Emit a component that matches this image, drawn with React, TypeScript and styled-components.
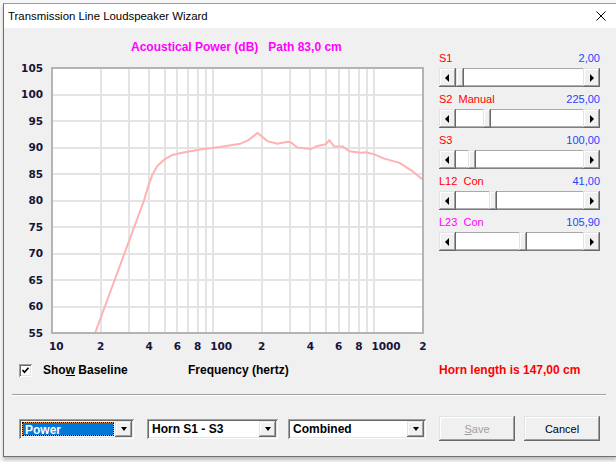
import React from 'react';
import styled, { createGlobalStyle } from 'styled-components';

const GlobalStyle = createGlobalStyle`
  html, body {
    margin: 0;
    padding: 0;
  }
  body {
    width: 616px;
    height: 462px;
    overflow: hidden;
    background: #f6f6f6;
    font-family: "Liberation Sans", Arial, sans-serif;
  }
`;

const Dialog = styled.div`
  margin: 3px 0 0 3px;
  height: 454px;
  box-sizing: border-box;
  display: flex;
  flex-direction: column;
  background: #f0f0f0;
  border-top: 1px solid #9a9a9a;
  border-left: 1px solid #707070;
  border-bottom: 1px solid #707070;
  box-shadow: 0 3px 3px rgba(0, 0, 0, 0.22);
`;

const TitleBar = styled.div`
  height: 24px;
  flex: none;
  display: flex;
  align-items: center;
  padding-left: 4px;
  background: #fff;
  font-size: 11.4px;
  color: #000;
`;

const CloseIcon = styled.svg`
  margin-left: auto;
  margin-right: 10px;
`;

const Main = styled.div`
  display: flex;
  padding-top: 12px;
`;

const ChartColumn = styled.div`
  width: 426px;
  flex: none;
`;

const ChartTitle = styled.div`
  height: 15px;
  line-height: 15px;
  padding-left: 127px;
  font-size: 12px;
  font-weight: bold;
  color: #ff00ff;
  white-space: pre;
`;

const ChartSvg = styled.svg`
  display: block;
`;

const SidePanel = styled.div`
  width: 161px;
  margin-left: 9px;
  padding-top: 11px;
  display: flex;
  flex-direction: column;
  gap: 5px;
`;

const SliderGroup = styled.div`
  display: flex;
  flex-direction: column;
  gap: 2px;
`;

const SliderHead = styled.div`
  height: 15px;
  line-height: 15px;
  display: flex;
  justify-content: space-between;
  font-size: 11px;
  white-space: pre;
`;

const SliderName = styled.span<{ $color: string }>`
  color: ${p => p.$color};
`;

const SliderValue = styled.span`
  color: #1f44ff;
`;

const ScrollBar = styled.div`
  height: 19px;
  display: flex;
`;

const ArrowButton = styled.div`
  width: 17px;
  flex: none;
  display: flex;
  align-items: center;
  justify-content: center;
  background: #f0f0f0;
  box-shadow: inset -1px -1px #696969, inset 1px 1px #e3e3e3, inset -2px -2px #a0a0a0,
    inset 2px 2px #fff;
`;

const Arrow = styled.div<{ $dir: 'left' | 'right' }>`
  width: 0;
  height: 0;
  border-top: 4px solid transparent;
  border-bottom: 4px solid transparent;
  ${p =>
    p.$dir === 'left'
      ? 'border-right: 4px solid #000; margin-left: -1px;'
      : 'border-left: 4px solid #000; margin-left: 1px;'}
`;

const Track = styled.div`
  flex: 1;
  display: flex;
  background: #fff;
  box-shadow: inset 0 1px #a9a9a9, inset 0 -1px #808080, inset 0 -2px #b0b0b0;
`;

const Thumb = styled.div`
  width: 8px;
  flex: none;
  background: #f0f0f0;
  box-shadow: inset -1px -1px #696969, inset 1px 1px #e3e3e3, inset -2px -2px #a0a0a0,
    inset 2px 2px #fff;
`;

const InfoRow = styled.div`
  height: 24px;
  display: grid;
  grid-template-columns: 169px 251px 1fr;
  align-items: center;
  padding-left: 15px;
  font-size: 12px;
  font-weight: bold;
`;

const CheckField = styled.label`
  display: flex;
  align-items: center;
  gap: 11px;
  color: #000;
`;

const CheckBox = styled.span`
  width: 13px;
  height: 13px;
  box-sizing: border-box;
  display: flex;
  align-items: center;
  justify-content: center;
  background: #fff;
  box-shadow: inset 1px 1px #a0a0a0, inset -1px -1px #fff, inset 2px 2px #696969,
    inset -2px -2px #e3e3e3;
`;

const InfoText = styled.span<{ $color?: string }>`
  color: ${p => p.$color ?? '#000'};
`;

const Separator = styled.div`
  margin: 12px 10px 0 8px;
  border-top: 1px solid #a0a0a0;
  border-bottom: 1px solid #fff;
`;

const Footer = styled.div`
  display: flex;
  align-items: center;
  padding: 20px 0 0 15px;
  height: 25px;
`;

const Combo = styled.div<{ $w: number; $gap: number }>`
  width: ${p => p.$w}px;
  margin-right: ${p => p.$gap}px;
  height: 20px;
  box-sizing: border-box;
  padding: 2px;
  flex: none;
  display: flex;
  background: #fff;
  box-shadow: inset 1px 1px #a0a0a0, inset -1px -1px #fff, inset 2px 2px #696969,
    inset -2px -2px #e3e3e3;
`;

const ComboText = styled.div<{ $selected?: boolean }>`
  flex: 1;
  margin: ${p => (p.$selected ? '1px' : '0')};
  padding-left: ${p => (p.$selected ? '2px' : '3px')};
  line-height: ${p => (p.$selected ? '14px' : '16px')};
  font-size: 12px;
  font-weight: bold;
  color: ${p => (p.$selected ? '#fff' : '#000')};
  border: ${p => (p.$selected ? '1px dotted #000' : 'none')};
  background: ${p =>
    p.$selected ? 'linear-gradient(#0078d7, #0078d7) padding-box, #f5a04a border-box' : 'transparent'};
  white-space: nowrap;
  overflow: hidden;
`;

const DropButton = styled.div`
  width: 17px;
  flex: none;
  display: flex;
  align-items: center;
  justify-content: center;
  background: #f0f0f0;
  box-shadow: inset -1px -1px #696969, inset 1px 1px #e3e3e3, inset -2px -2px #a0a0a0,
    inset 2px 2px #fff;
`;

const DownArrow = styled.div`
  width: 0;
  height: 0;
  border-left: 3.5px solid transparent;
  border-right: 3.5px solid transparent;
  border-top: 4px solid #000;
`;

const Button = styled.button<{ $gap?: number }>`
  width: 76px;
  height: 25px;
  flex: none;
  margin-right: ${p => p.$gap ?? 0}px;
  padding: 0;
  border: none;
  background: #f0f0f0;
  box-shadow: inset -1px -1px #696969, inset 1px 1px #e3e3e3, inset -2px -2px #a0a0a0,
    inset 2px 2px #fff;
  font-family: "Liberation Sans", Arial, sans-serif;
  font-size: 11px;
  color: #000;
  &:disabled {
    color: #a0a0a0;
  }
`;

// plot geometry inside the chart svg
const X0 = 48;
const X1 = 419;
const Y0 = 13;
const Y1 = 278;
const xOf = (hz: number) => X0 + ((Math.log10(hz) - 1) / Math.log10(200)) * (X1 - X0);
const yOf = (db: number) => Y0 + ((105 - db) / 50) * (Y1 - Y0);

const curve: [number, number][] = [
  [18.5, 55], [37.2, 80], [39.6, 82.8], [42, 84.9], [45, 86.5], [50, 87.8], [56, 88.6],
  [64, 89], [83, 89.6], [110, 90.1], [147, 90.7], [165, 91.4], [189, 92.75], [216, 91.2],
  [250, 90.7], [290, 91.1], [302, 91], [332, 90], [402, 89.7], [443, 90.3], [499, 90.6],
  [524, 91.4], [562, 90.2], [634, 90.2], [698, 89.3], [825, 89], [887, 89.1], [998, 88.7],
  [1153, 87.9], [1430, 87.1], [1691, 85.7], [2000, 83.9],
];

const gridFreqs = [20, 30, 40, 50, 60, 70, 80, 90, 100, 200, 300, 400, 500, 600, 700, 800, 900, 1000];
const gridDb = [60, 65, 70, 75, 80, 85, 90, 95, 100];
const yLabels = [55, 60, 65, 70, 75, 80, 85, 90, 95, 100, 105];
const xLabels: { hz: number; text: string; decade?: boolean }[] = [
  { hz: 10, text: '10', decade: true },
  { hz: 20, text: '2' },
  { hz: 40, text: '4' },
  { hz: 60, text: '6' },
  { hz: 80, text: '8' },
  { hz: 100, text: '100', decade: true },
  { hz: 200, text: '2' },
  { hz: 400, text: '4' },
  { hz: 600, text: '6' },
  { hz: 800, text: '8' },
  { hz: 1000, text: '1000', decade: true },
  { hz: 2000, text: '2' },
];

const axisFont = {
  fontFamily: '"DejaVu Sans", Verdana, sans-serif',
  fontSize: 10.5,
  fontWeight: 'bold' as const,
  fill: '#15153a',
};

function Chart() {
  const pts = curve.map(([hz, db]) => `${xOf(hz).toFixed(1)},${yOf(db).toFixed(1)}`).join(' ');
  return (
    <ChartSvg width={426} height={303}>
      <rect x={X0} y={Y0} width={X1 - X0} height={Y1 - Y0} fill="#fff" />
      <g stroke="#e4e4e4" strokeWidth={2} shapeRendering="crispEdges">
        {gridFreqs.map(f => (
          <line key={f} x1={Math.round(xOf(f))} x2={Math.round(xOf(f))} y1={Y0} y2={Y1} />
        ))}
        {gridDb.map(d => (
          <line key={d} x1={X0} x2={X1} y1={Math.round(yOf(d))} y2={Math.round(yOf(d))} />
        ))}
      </g>
      <polyline points={pts} fill="none" stroke="#ffb2b2" strokeWidth={2} strokeLinejoin="round" />
      <rect
        x={X0}
        y={Y0}
        width={X1 - X0}
        height={Y1 - Y0}
        fill="none"
        stroke="#b4b4b4"
        strokeWidth={2}
        shapeRendering="crispEdges"
      />
      {yLabels.map(d => (
        <text key={d} x={39} y={yOf(d)} dy="0.36em" textAnchor="end" {...axisFont}>
          {d}
        </text>
      ))}
      {xLabels.map((l, i) => (
        <text
          key={i}
          x={l.decade ? xOf(l.hz) - 3 : xOf(l.hz)}
          y={291}
          dy="0.36em"
          textAnchor={l.decade ? 'start' : 'middle'}
          {...axisFont}
        >
          {l.text}
        </text>
      ))}
    </ChartSvg>
  );
}

const sliders = [
  { name: 'S1', color: '#ff0000', value: '2,00', pos: 0 },
  { name: 'S2  Manual', color: '#ff0000', value: '225,00', pos: 0.23 },
  { name: 'S3', color: '#ff0000', value: '100,00', pos: 0.103 },
  { name: 'L12  Con', color: '#ff0000', value: '41,00', pos: 0.28 },
  { name: 'L23  Con', color: '#ff00ff', value: '105,90', pos: 0.532 },
];

const TRACK_RANGE = 127 - 8;

function Slider({ name, color, value, pos }: (typeof sliders)[number]) {
  return (
    <SliderGroup>
      <SliderHead>
        <SliderName $color={color}>{name}</SliderName>
        <SliderValue>{value}</SliderValue>
      </SliderHead>
      <ScrollBar>
        <ArrowButton>
          <Arrow $dir="left" />
        </ArrowButton>
        <Track>
          <Thumb style={{ marginLeft: Math.round(pos * TRACK_RANGE) }} />
        </Track>
        <ArrowButton>
          <Arrow $dir="right" />
        </ArrowButton>
      </ScrollBar>
    </SliderGroup>
  );
}

export default function App() {
  return (
    <>
      <GlobalStyle />
      <Dialog>
        <TitleBar>
          Transmission Line Loudspeaker Wizard
          <CloseIcon width={10} height={10} viewBox="0 0 10 10">
            <path d="M0.5 0.5 L9.5 9.5 M9.5 0.5 L0.5 9.5" stroke="#000" strokeWidth={1} />
          </CloseIcon>
        </TitleBar>
        <Main>
          <ChartColumn>
            <ChartTitle>{'Acoustical Power (dB)   Path 83,0 cm'}</ChartTitle>
            <Chart />
          </ChartColumn>
          <SidePanel>
            {sliders.map(s => (
              <Slider key={s.name} {...s} />
            ))}
          </SidePanel>
        </Main>
        <InfoRow>
          <CheckField>
            <CheckBox>
              <svg width={9} height={9} viewBox="0 0 9 9">
                <path d="M1.5 4 L3.5 6.2 L7.5 1.8" fill="none" stroke="#000" strokeWidth={1.7} />
              </svg>
            </CheckBox>
            <span>
              Sho<u>w</u> Baseline
            </span>
          </CheckField>
          <InfoText>Frequency (hertz)</InfoText>
          <InfoText $color="#ff0000">Horn length is 147,00 cm</InfoText>
        </InfoRow>
        <Separator />
        <Footer>
          <Combo $w={115} $gap={13}>
            <ComboText $selected>Power</ComboText>
            <DropButton>
              <DownArrow />
            </DropButton>
          </Combo>
          <Combo $w={131} $gap={10}>
            <ComboText>Horn S1 - S3</ComboText>
            <DropButton>
              <DownArrow />
            </DropButton>
          </Combo>
          <Combo $w={138} $gap={13}>
            <ComboText>Combined</ComboText>
            <DropButton>
              <DownArrow />
            </DropButton>
          </Combo>
          <Button $gap={9} disabled>
            <u>S</u>ave
          </Button>
          <Button>Cancel</Button>
        </Footer>
      </Dialog>
    </>
  );
}
